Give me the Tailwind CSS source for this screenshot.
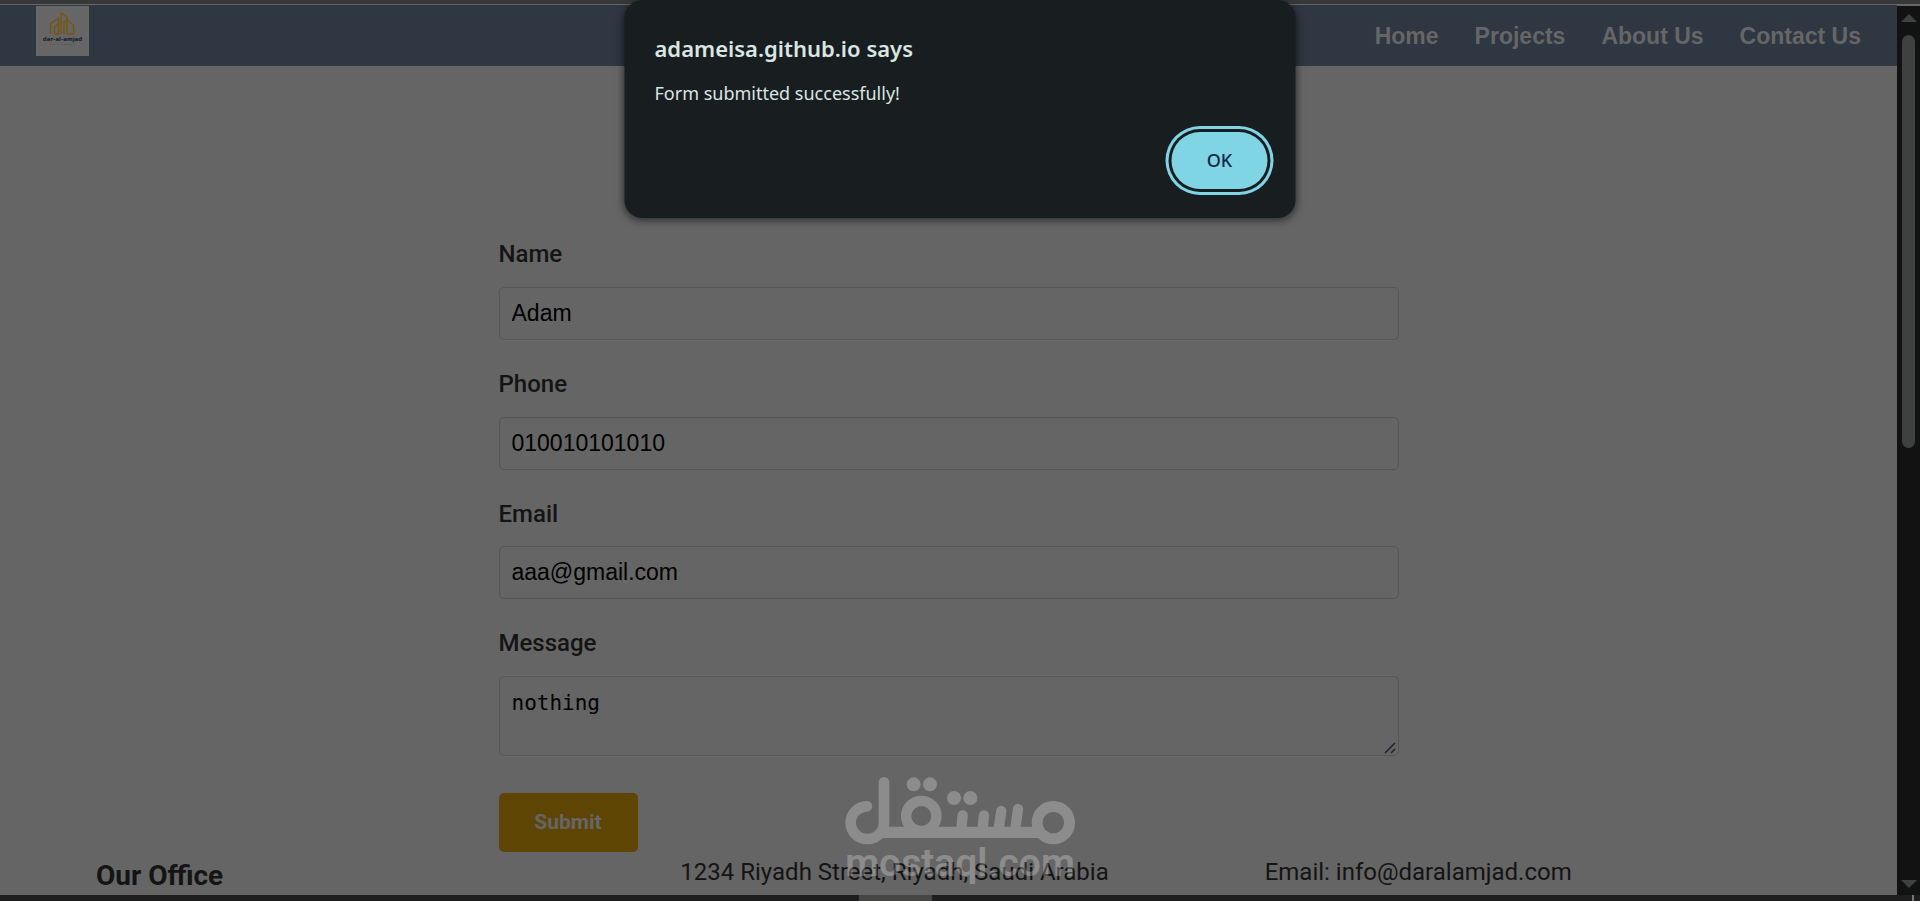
<!DOCTYPE html>
<html lang="en">
<head>
<meta charset="utf-8">
<title>Contact Us</title>
<script src="https://cdn.jsdelivr.net/npm/@tailwindcss/browser@4"></script>
</head>
<body class="relative flex h-screen flex-col overflow-hidden bg-[#656565] font-['Roboto',sans-serif] text-[#141414]">
  <div class="h-[5px] shrink-0 border-b border-[#666666] bg-[#383838]"></div>

  <div class="flex min-h-0 flex-1">
    <div class="min-w-0 flex-1 overflow-hidden">
      <header class="flex h-[61px] items-start justify-between bg-[#2f3742] pr-9 pl-9">
        <a href="#" aria-label="dar-al-amjad" class="mt-px block">
          <svg class="h-[50px] w-[53px]" viewBox="0 0 53 50">
            <rect width="53" height="50" fill="#666"/>
            <g fill="none" stroke="#765508" stroke-width="1.3">
              <path d="M14.500 28V17.500l8-5V18"/>
              <path d="M18.500 28v-7l4-3v10h-4"/>
              <path d="M25 28V7l6 4v17"/>
              <path d="M28 28V16l3-2 6.500 5v9h-6"/>
            </g>
            <text x="26.500" y="35" text-anchor="middle" font-family="DejaVu Sans, sans-serif" font-weight="700" font-size="5.500" fill="#1a1f28">dar-al-amjad</text>
            <path d="M13 38.500h27" stroke="#5a5a5a" stroke-width="1" stroke-dasharray="2 1"/>
          </svg>
        </a>
        <nav class="mt-4 flex gap-9 font-['Liberation_Sans',Arial,sans-serif] text-[23px] leading-[30px] font-bold text-[#666666]">
          <a href="#">Home</a>
          <a href="#">Projects</a>
          <a href="#">About Us</a>
          <a href="#">Contact Us</a>
        </nav>
      </header>

      <form class="mx-auto flex w-[900px] max-w-full flex-col pt-[172px]">
        <label for="name" class="text-2xl leading-8 font-medium">Name</label>
        <input id="name" type="text" value="Adam" class="mt-[17px] mb-7 h-[53px] rounded-[5px] border border-[#565656] px-3 font-['Liberation_Sans',Arial,sans-serif] text-[23px] text-black">
        <label for="phone" class="text-2xl leading-8 font-medium">Phone</label>
        <input id="phone" type="tel" value="010010101010" class="mt-[17px] mb-7 h-[53px] rounded-[5px] border border-[#565656] px-3 font-['Liberation_Sans',Arial,sans-serif] text-[23px] text-black">
        <label for="email" class="text-2xl leading-8 font-medium">Email</label>
        <input id="email" type="email" value="aaa@gmail.com" class="mt-4 mb-7 h-[53px] rounded-[5px] border border-[#565656] px-3 font-['Liberation_Sans',Arial,sans-serif] text-[23px] text-black">
        <label for="message" class="text-2xl leading-8 font-medium">Message</label>
        <div class="relative mt-[17px] mb-[37px] h-20">
          <textarea id="message" class="block h-20 w-full resize-none rounded-[5px] border border-[#565656] px-3 py-3 font-['DejaVu_Sans_Mono',monospace] text-[21px] leading-7 text-black">nothing</textarea>
          <svg class="absolute right-[3px] bottom-0.5 h-3 w-3" viewBox="0 0 12 12" stroke="#1f252d" stroke-width="1.6"><path d="M1 11L11 1M7 11l4-4"/></svg>
        </div>
        <button type="submit" class="h-[59px] w-[139px] rounded-[5px] bg-[#5e4504] text-[21px] font-bold text-[#666666]">Submit</button>
      </form>

      <footer class="grid grid-cols-3 gap-x-12 px-24 pt-1">
        <h3 class="pt-1 text-[28px] leading-8 font-bold">Our Office</h3>
        <p class="text-2xl leading-8 whitespace-nowrap">1234 Riyadh Street, Riyadh, Saudi Arabia</p>
        <p class="text-2xl leading-8 whitespace-nowrap">Email: info@daralamjad.com</p>
      </footer>
    </div>

    <div class="mt-px flex w-[23px] shrink-0 flex-col items-center bg-[#121212] pt-2 pb-[7px]" aria-hidden="true">
      <svg class="h-2 w-4" viewBox="0 0 16 8" fill="#3f4140"><path d="M8 0l8 8H0z"/></svg>
      <div class="mt-[13px] h-[413px] w-[13px] rounded-full bg-[#3f4140]"></div>
      <svg class="mt-auto h-2 w-4" viewBox="0 0 16 8" fill="#3f4140"><path d="M0 0h16L8 8z"/></svg>
    </div>
  </div>

  <div class="flex h-1.5 shrink-0 justify-between bg-[#1e1e1e] pr-1.5 pl-[859px]">
    <div class="w-[73px] bg-[#464644]"></div>
    <div class="w-0.5 bg-[#777777]"></div>
  </div>

  <!-- Watermark -->
  <div class="pointer-events-none absolute top-[777px] left-1/2 flex w-[230px] -translate-x-1/2 flex-col items-center text-white opacity-25">
    <svg class="h-[68px] w-[230px]" viewBox="75 51 690 204" fill="none" stroke="currentColor" stroke-linecap="round">
      <circle cx="700" cy="188" r="48.500" stroke-width="33"/>
      <path d="M180 217H660" stroke-width="34" stroke-linecap="butt"/>
      <circle cx="304" cy="168" r="45.500" stroke-width="31"/>
      <path d="M192 67V188A50 49 0 1 1 141 139" stroke-width="32"/>
      <path d="M428 166l-4 40M492 166l-4 40M544 153l-8 53M594 147l-8 59" stroke-width="31"/>
      <g fill="currentColor" stroke="none"><circle cx="281" cy="73" r="21"/><circle cx="330" cy="73" r="21"/><circle cx="402" cy="114" r="21"/><circle cx="451" cy="114" r="21"/></g>
    </svg>
    <span class="text-[39px] leading-9 font-semibold">mostaql.com</span>
  </div>

  <!-- Alert -->
  <div role="alertdialog" aria-labelledby="alert-title" aria-describedby="alert-text" class="absolute top-0 left-1/2 flex h-[218px] w-[671px] -translate-x-1/2 flex-col rounded-[18px] bg-[#181d1f] pr-7 pl-[30px] pt-[33px] font-['Noto_Sans',sans-serif] text-[#d9e6e2] shadow-[0_2px_8px_rgba(0,0,0,0.6)]">
    <h2 id="alert-title" class="text-[22px] leading-[30px] font-semibold">adameisa.github.io says</h2>
    <p id="alert-text" class="mt-[15px] text-[18px] leading-[30px]">Form submitted successfully!</p>
    <button type="button" class="mt-6 h-[57px] w-24 self-end rounded-full bg-[#80d5e4] text-[18px] font-medium text-[#0c2a44] ring-3 ring-[#80d5e4] ring-offset-3 ring-offset-[#181d1f]">OK</button>
  </div>
</body>
</html>
